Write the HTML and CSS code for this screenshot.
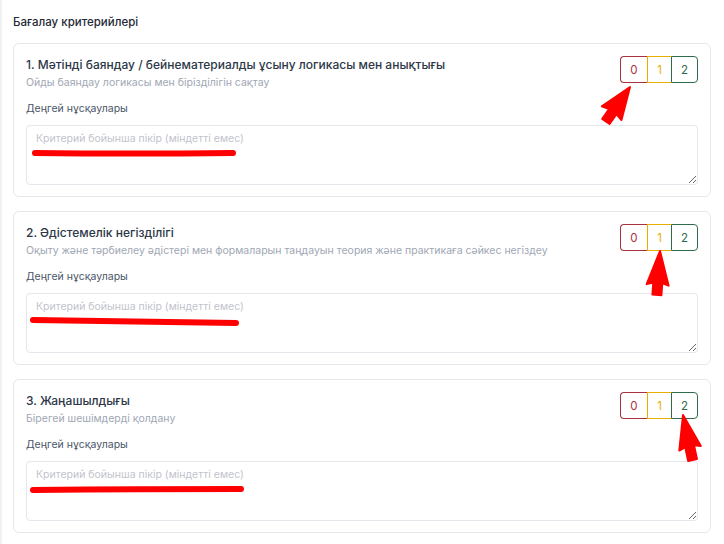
FILE: index.html
```html
<!DOCTYPE html>
<html lang="kk">
<head>
    <meta charset="UTF-8">
    <meta name="viewport" content="width=device-width, initial-scale=1.0">
    <title>Бағалау критерийлері</title>
    <link rel="stylesheet" href="styles.css">
</head>
<body>
    <div class="page">
        <h3 class="section_title">Бағалау критерийлері</h3>

        <div class="criteria_list">
            <div class="criterion_card">
                <div class="criterion_head">
                    <div>
                        <div class="criterion_title">1. Мәтінді баяндау / бейнематериалды ұсыну логикасы мен анықтығы</div>
                        <div class="criterion_desc">Ойды баяндау логикасы мен бірізділігін сақтау</div>
                    </div>
                    <div class="score_group">
                        <button class="score score_0">0</button>
                        <button class="score score_1">1</button>
                        <button class="score score_2">2</button>
                    </div>
                </div>
                <div class="field_label">Деңгей нұсқаулары</div>
                <textarea class="comment_box" placeholder="Критерий бойынша пікір (міндетті емес)"></textarea>
            </div>

            <div class="criterion_card">
                <div class="criterion_head">
                    <div>
                        <div class="criterion_title">2. Әдістемелік негізділігі</div>
                        <div class="criterion_desc">Оқыту және тәрбиелеу әдістері мен формаларын таңдауын теория және практикаға сәйкес негіздеу</div>
                    </div>
                    <div class="score_group">
                        <button class="score score_0">0</button>
                        <button class="score score_1">1</button>
                        <button class="score score_2">2</button>
                    </div>
                </div>
                <div class="field_label">Деңгей нұсқаулары</div>
                <textarea class="comment_box" placeholder="Критерий бойынша пікір (міндетті емес)"></textarea>
            </div>

            <div class="criterion_card">
                <div class="criterion_head">
                    <div>
                        <div class="criterion_title">3. Жаңашылдығы</div>
                        <div class="criterion_desc">Бірегей шешімдерді қолдану</div>
                    </div>
                    <div class="score_group">
                        <button class="score score_0">0</button>
                        <button class="score score_1">1</button>
                        <button class="score score_2">2</button>
                    </div>
                </div>
                <div class="field_label">Деңгей нұсқаулары</div>
                <textarea class="comment_box" placeholder="Критерий бойынша пікір (міндетті емес)"></textarea>
            </div>
        </div>
    </div>

    <!-- red marker notes drawn over the form -->
    <svg class="marks" width="724" height="544" viewBox="0 0 724 544">
        <g fill="none" stroke="#f00" stroke-width="6" stroke-linecap="round">
            <path d="M35 153 Q130 154 233 153"/>
            <path d="M33 320 Q140 322 236 323"/>
            <path d="M33 490 Q140 489 241 489"/>
        </g>
        <g fill="#f00" stroke="#f00" stroke-width="2" stroke-linejoin="round">
            <polygon transform="translate(630 87) rotate(35)" points="0,0 12,32 4.5,30 4.5,42 -4.5,42 -4.5,30 -12,32"/>
            <polygon transform="translate(660 251) rotate(4)" points="0,0 11,34 4.5,32 4.5,44 -4.5,44 -4.5,32 -11,34"/>
            <polygon transform="translate(683 415) rotate(-12)" points="0,0 11,34 4.5,32 4.5,46 -4.5,46 -4.5,32 -11,34"/>
        </g>
    </svg>
</body>
</html>
```

FILE: styles.css
```css
:root {
    --text-dark: #2d3748;
    --text-muted: #a0a7b4;
    --border-gray: #e4e7eb;
    --score-red: #a8323e;
    --score-yellow: #e6b000;
    --score-green: #2f6b4b;
}

body {
    font-family: Inter, "Noto Sans", sans-serif;
    background-color: #ffffff;
    margin: 0;
    padding: 0;
    color: var(--text-dark);
}

.page {
    padding: 13px 13px 12px;
    border-left: 2px solid #f1f2f4;
}

.section_title {
    font-size: 11.5px;
    font-weight: 500;
    line-height: 19px;
    margin: 0 0 11px -2px;
    color: #1f2937;
}

.criteria_list {
    display: flex;
    flex-direction: column;
    gap: 14px;
    margin-left: -2px;
}

.criterion_card {
    border: 1px solid var(--border-gray);
    border-radius: 6px;
    padding: 12px 12px 11px 12px;
    display: flex;
    flex-direction: column;
}

.criterion_head {
    display: flex;
    justify-content: space-between;
    align-items: flex-start;
    gap: 12px;
}

.criterion_title {
    font-size: 12px;
    font-weight: 500;
    line-height: 18px;
    color: var(--text-dark);
}

.criterion_desc {
    font-size: 10.5px;
    line-height: 18px;
    color: var(--text-muted);
}

.field_label {
    font-size: 10.5px;
    line-height: 18px;
    margin-top: 8px;
    color: #4a5568;
}

.comment_box {
    margin-top: 7px;
    height: 60px;
    box-sizing: border-box;
    border: 1px solid var(--border-gray);
    border-radius: 4px;
    padding: 5px 9px;
    font-family: Inter, "Noto Sans", sans-serif;
    font-size: 10.5px;
    line-height: 16px;
    resize: vertical;
}

.comment_box::placeholder {
    color: #bfc4cc;
}

.score_group {
    display: flex;
    flex-shrink: 0;
}

.score {
    background: white;
    height: 27px;
    padding: 0;
    font-family: Inter, "Noto Sans", sans-serif;
    font-size: 11.5px;
    border: 1px solid;
    cursor: pointer;
}

.score_0 {
    color: var(--score-red);
    border-color: var(--score-red);
    border-right: none;
    border-radius: 4px 0 0 4px;
    width: 27px;
}

.score_1 {
    color: var(--score-yellow);
    border-color: var(--score-yellow);
    border-right: none;
    width: 24px;
}

.score_2 {
    color: var(--score-green);
    border-color: var(--score-green);
    border-radius: 0 4px 4px 0;
    width: 27px;
}

.marks {
    position: absolute;
    top: 0;
    left: 0;
    pointer-events: none;
}
```
